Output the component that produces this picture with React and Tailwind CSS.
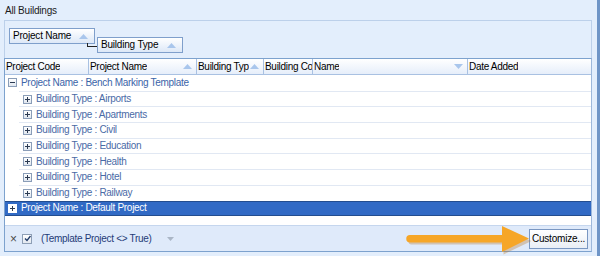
import React from 'react';

const font = { fontFamily: '"Liberation Sans", Arial, sans-serif' };

const columns = [
  { label: 'Project Code', w: 'w-[84px] pr-[4px]' },
  { label: 'Project Name', w: 'w-[108px] pr-[4px]', sort: 'up' },
  { label: 'Building Typ', w: 'w-[67px] pr-[4px]', sort: 'up' },
  { label: 'Building Co', w: 'w-[49px] pr-0' },
  { label: 'Name', w: 'w-[155px] pr-[4px]', sort: 'down' },
  { label: 'Date Added', w: 'flex-1 pr-[4px]' },
];

const buildingTypes = ['Airports', 'Apartments', 'Civil', 'Education', 'Health', 'Hotel', 'Railway'];

function SortArrow({ dir }) {
  return (
    <svg width="9" height="5" viewBox="0 0 9 5" className="shrink-0">
      {dir === 'up' ? <path d="M0 5 L4.5 0 L9 5 Z" fill="#a9c6ec" /> : <path d="M0 0 L4.5 5 L9 0 Z" fill="#a9c6ec" />}
    </svg>
  );
}

function ExpandBox({ open, selected }) {
  return (
    <span
      className={
        'w-[9px] h-[9px] shrink-0 border flex items-center justify-center ' +
        (selected ? 'border-white bg-white' : 'border-[#8a9db8] bg-gradient-to-b from-white to-[#dfe6ef]')
      }
    >
      <svg width="7" height="7" viewBox="0 0 7 7">
        <path d="M1 3.5 H6" stroke="#2b3a52" strokeWidth="1" />
        {!open && <path d="M3.5 1 V6" stroke="#2b3a52" strokeWidth="1" />}
      </svg>
    </span>
  );
}

function Chip({ children }) {
  return (
    <div className="h-[16px] w-[86px] border border-[#7f9fcb] bg-gradient-to-b from-white to-[#dde8f7] flex items-center justify-between pl-[3px] pr-[6px] text-[10px] tracking-[-0.2px] text-black leading-none whitespace-nowrap">
      <span>{children}</span>
      <SortArrow dir="up" />
    </div>
  );
}

export default function App() {
  return (
    <div
      className="w-[600px] h-[256px] bg-[#e3eefc] border-r-[3px] border-[#6f95c7] relative overflow-hidden flex flex-col pl-[4px] pr-[5px]"
      style={font}
    >
      <div className="h-[20px] pt-[4px] pl-[1px] text-[10px] tracking-[-0.2px] text-[#1b1b1b] leading-[13px]">All Buildings</div>

      {/* Group panel */}
      <div className="h-[38px] border border-b-0 border-[#bcd0ea] flex items-start pl-[4px]">
        <div className="mt-[7px]">
          <Chip>Project Name</Chip>
        </div>
        <div className="mt-[22px] -ml-[8px] w-[10px] h-[4px] border-l border-b border-[#222]" />
        <div className="mt-[16px]">
          <Chip>Building Type</Chip>
        </div>
      </div>

      {/* Grid */}
      <div className="flex-1 flex flex-col border border-[#7da2ce] border-r-[#9db8db] mb-[4px]">
        <div className="h-[16px] flex bg-gradient-to-b from-white to-[#e6eefa] border-b border-[#a9c1e2]">
          {columns.map((c) => (
            <div
              key={c.label}
              className={c.w + ' h-full border-r border-[#a9c1e2] last:border-r-0 flex items-center justify-between pl-[1px] text-[10px] tracking-[-0.3px] text-black leading-none overflow-hidden whitespace-nowrap'}
            >
              <span className="overflow-hidden">{c.label}</span>
              {c.sort && <SortArrow dir={c.sort} />}
            </div>
          ))}
        </div>

        <div className="h-[150px] bg-white flex flex-col">
          <div className="h-[15.7px] flex items-center pl-[3px] gap-[4px] text-[10px] tracking-[-0.3px] text-[#3b64a8] leading-none">
            <ExpandBox open />
            <span>Project Name : Bench Marking Template</span>
          </div>
          {buildingTypes.map((t) => (
            <div key={t} className="h-[15.7px] flex">
              <div className="w-[14px] shrink-0" />
              <div className="flex-1 border-t border-[#e1e8f3] flex items-center pl-[4px] gap-[4px] text-[10px] tracking-[-0.3px] text-[#4a6aa6] leading-none">
                <ExpandBox />
                <span>Building Type : {t}</span>
              </div>
            </div>
          ))}
          <div className="h-[15.7px] flex items-center pl-[3px] gap-[4px] bg-[#316ac5] border-y border-[#234d8f] text-[10px] tracking-[-0.3px] text-white leading-none">
            <ExpandBox selected />
            <span>Project Name : Default Project</span>
          </div>
        </div>

        {/* Filter panel */}
        <div className="flex-1 bg-[#dfeafa] border-t border-[#c5d6ee] flex items-center pl-[5px] pr-[3px] text-[10px] tracking-[-0.3px] leading-none">
          <span className="text-[#4b4b4b] text-[12px] w-[12px]">×</span>
          <span className="w-[10px] h-[10px] border border-[#8e9fb6] bg-gradient-to-b from-white to-[#e3e8ef] flex items-center justify-center">
            <svg width="7" height="7" viewBox="0 0 7 7">
              <path d="M1 3.5 L3 5.5 L6.5 1" stroke="#1f3a68" strokeWidth="1.3" fill="none" />
            </svg>
          </span>
          <span className="ml-[9px] text-[#1f3c78]">(Template Project &lt;&gt; True)</span>
          <svg width="7" height="4" viewBox="0 0 7 4" className="ml-[15px]">
            <path d="M0 0 L3.5 4 L7 0 Z" fill="#aab6c6" />
          </svg>
          <div className="flex-1" />
          <button className="h-[20px] w-[59px] border border-[#7a97c2] bg-gradient-to-b from-white to-[#e9eef6] text-[10px] tracking-[-0.2px] text-black leading-none">
            Customize...
          </button>
        </div>
      </div>

      {/* Callout arrow */}
      <svg className="absolute left-[404px] top-[224px]" width="128" height="32" viewBox="0 0 128 32">
        <path d="M6 13 H98 V3 L126 15.5 L98 29 V19 H6 A3 3 0 0 1 6 13 Z" fill="#b8792a" opacity="0.35" transform="translate(1.5,1.5)" />
        <path d="M6 11 H98 V2 L125 14.5 L98 28 V18.5 H6 A3.75 3.75 0 0 1 6 11 Z" fill="#f6a627" />
      </svg>
    </div>
  );
}
